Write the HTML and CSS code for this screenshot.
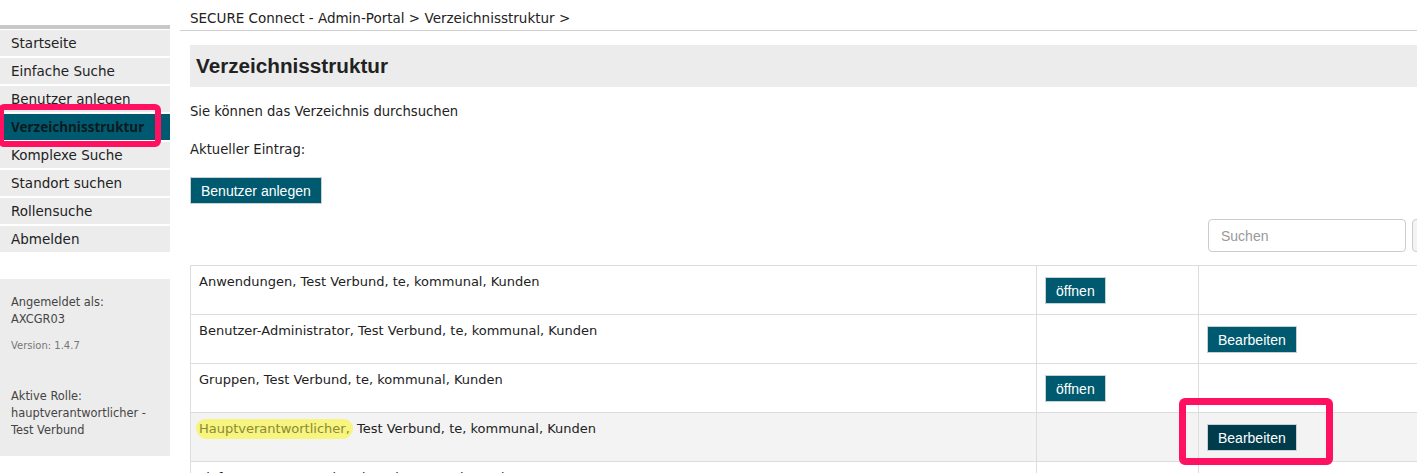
FILE: index.html
```html
<!DOCTYPE html>
<html lang="de">
<head>
<meta charset="utf-8">
<title>Verzeichnisstruktur</title>
<link rel="stylesheet" href="styles.css">
</head>
<body>
<div class="page">
  <aside class="sidebar">
    <ul class="menu">
      <li class="menu-item">Startseite</li>
      <li class="menu-item">Einfache Suche</li>
      <li class="menu-item">Benutzer anlegen</li>
      <li class="menu-item active">Verzeichnisstruktur</li>
      <li class="menu-item">Komplexe Suche</li>
      <li class="menu-item">Standort suchen</li>
      <li class="menu-item">Rollensuche</li>
      <li class="menu-item">Abmelden</li>
    </ul>
    <div class="info">
      <div class="info-line">Angemeldet als:</div>
      <div class="info-line">AXCGR03</div>
      <div class="version">Version: 1.4.7</div>
      <div class="info-line">Aktive Rolle:</div>
      <div class="info-line">hauptverantwortlicher -</div>
      <div class="info-line">Test Verbund</div>
    </div>
  </aside>

  <main class="main">
    <div class="breadcrumb">SECURE Connect - Admin-Portal &gt; Verzeichnisstruktur &gt;</div>
    <div class="content">
      <div class="title-box"><h1 class="title">Verzeichnisstruktur</h1></div>
      <p class="lead">Sie können das Verzeichnis durchsuchen</p>
      <p class="current">Aktueller Eintrag:</p>
      <button class="btn btn-create">Benutzer anlegen</button>

      <div class="search-row">
        <input class="search-input" type="text" placeholder="Suchen">
        <button class="search-btn">Suchen</button>
      </div>

      <table class="dir-table">
        <colgroup>
          <col class="c1"><col class="c2"><col class="c3">
        </colgroup>
        <tr>
          <td class="name">Anwendungen, Test Verbund, te, kommunal, Kunden</td>
          <td class="act"><button class="btn">öffnen</button></td>
          <td class="act"></td>
        </tr>
        <tr>
          <td class="name">Benutzer-Administrator, Test Verbund, te, kommunal, Kunden</td>
          <td class="act"></td>
          <td class="act"><button class="btn">Bearbeiten</button></td>
        </tr>
        <tr>
          <td class="name">Gruppen, Test Verbund, te, kommunal, Kunden</td>
          <td class="act"><button class="btn">öffnen</button></td>
          <td class="act"></td>
        </tr>
        <tr class="hover">
          <td class="name"><span class="marker">Hauptverantwortlicher,</span> Test Verbund, te, kommunal, Kunden</td>
          <td class="act"></td>
          <td class="act"><button class="btn btn-dark">Bearbeiten</button></td>
        </tr>
        <tr>
          <td class="name">Lieferanten, Test Verbund, te, kommunal, Kunden</td>
          <td class="act"><button class="btn">öffnen</button></td>
          <td class="act"></td>
        </tr>
      </table>
    </div>
  </main>
</div>

<div class="annot annot-menu"></div>
<div class="annot annot-edit"></div>
</body>
</html>
```

FILE: styles.css
```css
html, body {
  margin: 0;
  padding: 0;
  background: #ffffff;
  overflow: hidden;
}

body {
  font-family: "DejaVu Sans", "Noto Sans", sans-serif;
  font-size: 13px;
  color: #222222;
  position: relative;
  width: 1417px;
  height: 473px;
}

.page {
  display: flex;
  align-items: flex-start;
  width: 1600px;
}

/* Sidebar */
.sidebar {
  width: 170px;
  flex: 0 0 170px;
  margin-top: 25px;
}

.menu {
  list-style: none;
  margin: 0;
  padding: 0;
  border-top: 4px solid #c8c8c8;
}

.menu-item {
  height: 26px;
  line-height: 26px;
  padding-left: 11px;
  background: #ececec;
  border-top: 2px solid #ffffff;
  color: #222222;
  font-size: 13.5px;
}

.menu-item:first-child {
  border-top-width: 1px;
}

.menu-item.active {
  background: #005a6f;
  color: #0c1a1e;
  font-family: "Noto Sans", sans-serif;
  font-size: 13.5px;
  font-weight: 700;
}

.info {
  margin-top: 27px;
  background: #ececec;
  height: 177px;
  box-sizing: border-box;
  padding: 15px 11px 0;
  font-size: 11.4px;
  color: #444444;
}

.info-line {
  line-height: 17px;
}

.version {
  font-size: 10px;
  color: #777777;
  line-height: 17px;
  margin-top: 9px;
  margin-bottom: 34px;
}

/* Main */
.main {
  flex: 1 1 auto;
  margin-left: 10px;
}

.breadcrumb {
  line-height: 36px;
  padding-left: 10px;
  border-bottom: 1px solid #d0d0d0;
  box-sizing: border-box;
  height: 31px;
  color: #222222;
  font-size: 13.5px;
}

.content {
  padding-left: 10px;
  width: 1282px;
}

.title-box {
  margin-top: 14px;
  height: 42px;
  background: #ececec;
  display: flex;
  align-items: center;
  padding-left: 6px;
}

.title {
  margin: 0;
  font-family: "Liberation Sans", Arial, sans-serif;
  font-weight: 700;
  font-size: 20.7px;
  color: #222222;
}

.lead {
  margin: 15px 0 0;
  line-height: 20px;
  font-size: 13.2px;
}

.current {
  margin: 18px 0 0;
  line-height: 20px;
  font-size: 13.2px;
}

.btn {
  font-family: "Liberation Sans", Arial, sans-serif;
  font-size: 14px;
  color: #ffffff;
  background: #005a6f;
  border: 1px solid #c9d0d3;
  height: 27px;
  padding: 0 10px;
  cursor: pointer;
}

.btn-dark {
  background: #003b4c;
}

.btn-create {
  margin-top: 17px;
  display: block;
}

.search-row {
  display: flex;
  justify-content: flex-end;
  gap: 6px;
  margin-top: 15px;
}

.search-input {
  width: 198px;
  height: 33px;
  box-sizing: border-box;
  border: 1px solid #cccccc;
  border-radius: 4px;
  padding: 0 12px;
  font-family: "Liberation Sans", Arial, sans-serif;
  font-size: 14px;
  color: #555555;
}

.search-input::placeholder {
  color: #999999;
}

.search-btn {
  width: 60px;
  height: 33px;
  border: 1px solid #cccccc;
  border-radius: 4px;
  background: #f4f4f4;
  font-family: "Liberation Sans", Arial, sans-serif;
  font-size: 14px;
  color: #333333;
}

.dir-table {
  margin-top: 13px;
  width: 100%;
  border-collapse: collapse;
  table-layout: fixed;
}

.c1 { width: 846px; }
.c2 { width: 162px; }

.dir-table td {
  border: 1px solid #dddddd;
  height: 49px;
  box-sizing: border-box;
    vertical-align: top;
}

.dir-table td.name {
  padding: 6px 8px 0;
  line-height: 20px;
}

.dir-table td.act {
  padding: 11px 8px 0;
}

.dir-table tr.hover td {
  background: #f3f3f3;
}

.marker {
  background: rgba(248, 244, 90, 0.75);
  color: #8a8a36;
  border-radius: 10px 10px 12px 12px;
  padding: 2px 3px 3px 3px;
  margin-left: -3px;
}

/* Annotation overlays */
.annot {
  position: absolute;
  border: 6px solid #ff1060;
  border-radius: 6px;
  box-sizing: border-box;
  pointer-events: none;
}

.annot-menu {
  left: -2px;
  top: 104px;
  width: 163px;
  height: 43px;
}

.annot-edit {
  left: 1179px;
  top: 398px;
  width: 154px;
  height: 67px;
  border-width: 7px;
}
```
